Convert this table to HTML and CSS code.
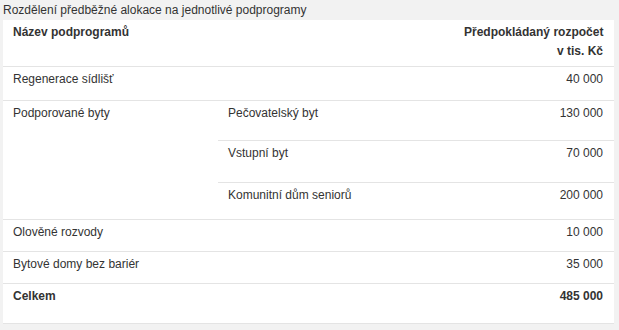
FILE: index.html
```html
<!DOCTYPE html>
<html lang="cs">
<head>
<meta charset="utf-8">
<link rel="stylesheet" href="styles.css">
</head>
<body>
<div class="wrap">
  <div class="caption">Rozdělení předběžné alokace na jednotlivé podprogramy</div>
  <table class="alloc">
    <colgroup>
      <col class="c1"><col class="c2"><col class="c3">
    </colgroup>
    <thead>
      <tr class="r-head">
        <th colspan="2" class="left">Název podprogramů</th>
        <th class="num">Předpokládaný rozpočet<br>v tis. Kč</th>
      </tr>
    </thead>
    <tbody>
      <tr class="r34">
        <td colspan="2">Regenerace sídlišť</td>
        <td class="num">40 000</td>
      </tr>
      <tr class="r40">
        <td rowspan="3" class="group">Podporované byty</td>
        <td>Pečovatelský byt</td>
        <td class="num">130 000</td>
      </tr>
      <tr class="r42">
        <td>Vstupní byt</td>
        <td class="num">70 000</td>
      </tr>
      <tr class="r37">
        <td>Komunitní dům seniorů</td>
        <td class="num">200 000</td>
      </tr>
      <tr class="r32">
        <td colspan="2">Olověné rozvody</td>
        <td class="num">10 000</td>
      </tr>
      <tr class="r32">
        <td colspan="2">Bytové domy bez bariér</td>
        <td class="num">35 000</td>
      </tr>
      <tr class="r40 total">
        <td colspan="2">Celkem</td>
        <td class="num">485 000</td>
      </tr>
    </tbody>
  </table>
</div>
</body>
</html>
```
FILE: styles.css
```css
html, body {
  margin: 0;
  padding: 0;
  background: #f2f2f2;
}
body {
  font-family: "Liberation Sans", Arial, sans-serif;
  font-size: 12px;
  color: #333;
}
.wrap {
  padding: 1px 5px 0 3px;
}
.caption {
  line-height: 19px;
  height: 19px;
}
.alloc {
  width: 611px;
  border-collapse: collapse;
  background: #fff;
  table-layout: fixed;
}
.c1 { width: 215px; }
.c2 { width: 236px; }
.c3 { width: 160px; }
.alloc th,
.alloc td {
  text-align: left;
  vertical-align: top;
  padding: 3px 10px 0 10px;
  line-height: 19px;
  border-bottom: 1px solid #e4e4e4;
  white-space: nowrap;
}
.alloc th {
  font-weight: bold;
  padding-top: 3px;
}
.alloc .num {
  text-align: right;
  padding-right: 11px;
}
.r-head { height: 46px; }
.r34 { height: 34px; }
.r40 { height: 40px; }
.r42 { height: 42px; }
.r37 { height: 37px; }
.r32 { height: 32px; }
.total td { font-weight: bold; }
```
